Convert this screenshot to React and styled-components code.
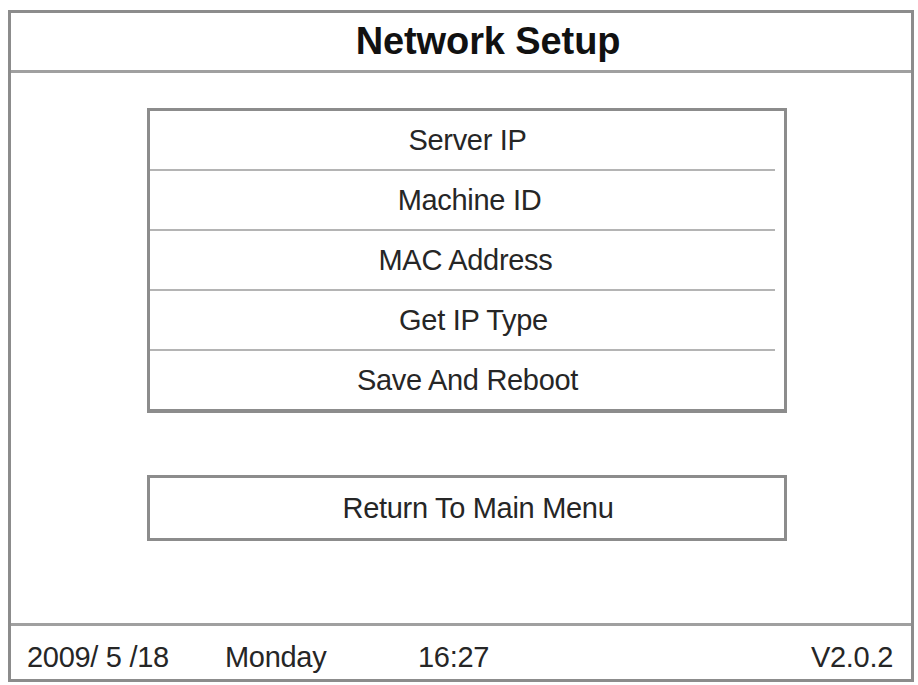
import React from 'react'
import styled, { createGlobalStyle } from 'styled-components'

const GlobalStyle = createGlobalStyle`
  html, body {
    margin: 0;
    padding: 0;
    background: #ffffff;
  }
  body {
    font-family: "Liberation Sans", Arial, sans-serif;
    color: #222;
  }
`

const menuItems = [
  { label: 'Server IP', shift: 10 },
  { label: 'Machine ID', shift: 14 },
  { label: 'MAC Address', shift: 6 },
  { label: 'Get IP Type', shift: 22 },
  { label: 'Save And Reboot', shift: 10 },
]

export default function App() {
  return (
    <>
      <GlobalStyle />
      <Screen>
        <Header>
          <Title>Network Setup</Title>
        </Header>
        <Body>
          <Menu>
            {menuItems.map((item, i) => (
              <MenuRow key={item.label} $last={i === menuItems.length - 1}>
                <RowLabel $shift={item.shift}>{item.label}</RowLabel>
              </MenuRow>
            ))}
          </Menu>
          <ReturnButton>
            <RowLabel $shift={22}>Return To Main Menu</RowLabel>
          </ReturnButton>
        </Body>
        <StatusBar>
          <StatusItem $width="198px">2009/ 5 /18</StatusItem>
          <StatusItem $width="193px">Monday</StatusItem>
          <StatusItem>16:27</StatusItem>
          <Version>V2.0.2</Version>
        </StatusBar>
      </Screen>
    </>
  )
}

const Screen = styled.div`
  box-sizing: border-box;
  margin: 10px 0 0 8px;
  width: 906px;
  height: 672px;
  border: 3px solid #8c8c8c;
  display: flex;
  flex-direction: column;
  background: #fff;
`

const Header = styled.div`
  height: 57px;
  border-bottom: 3px solid #a0a0a0;
  display: flex;
  align-items: center;
  justify-content: center;
  padding-left: 54px;
`

const Title = styled.h1`
  margin: 0;
  font-size: 38px;
  font-weight: bold;
  color: #111;
  letter-spacing: -0.1px;
`

const Body = styled.div`
  flex: 1;
  padding: 35px 0 0 136px;
  display: flex;
  flex-direction: column;
  gap: 62px;
`

const Menu = styled.div`
  box-sizing: border-box;
  width: 640px;
  border: 3px solid #8c8c8c;
  border-bottom-width: 4px;
  display: flex;
  flex-direction: column;
`

const MenuRow = styled.div`
  height: 58px;
  margin-right: 9px;
  display: flex;
  align-items: center;
  justify-content: center;
  border-bottom: ${p => (p.$last ? 'none' : '2px solid #b4b4b4')};
`

const RowLabel = styled.span`
  font-size: 29px;
  color: #262626;
  letter-spacing: -0.3px;
  padding-left: ${p => p.$shift}px;
`

const ReturnButton = styled.div`
  box-sizing: border-box;
  width: 640px;
  height: 66px;
  border: 3px solid #8c8c8c;
  display: flex;
  align-items: center;
  justify-content: center;
`

const StatusBar = styled.div`
  height: 56px;
  border-top: 3px solid #a0a0a0;
  display: flex;
  align-items: center;
  padding: 10px 18px 0 16px;
  box-sizing: border-box;
`

const StatusItem = styled.span`
  width: ${p => p.$width || 'auto'};
  font-size: 29px;
  color: #262626;
  letter-spacing: -0.3px;
`

const Version = styled(StatusItem)`
  margin-left: auto;
`
